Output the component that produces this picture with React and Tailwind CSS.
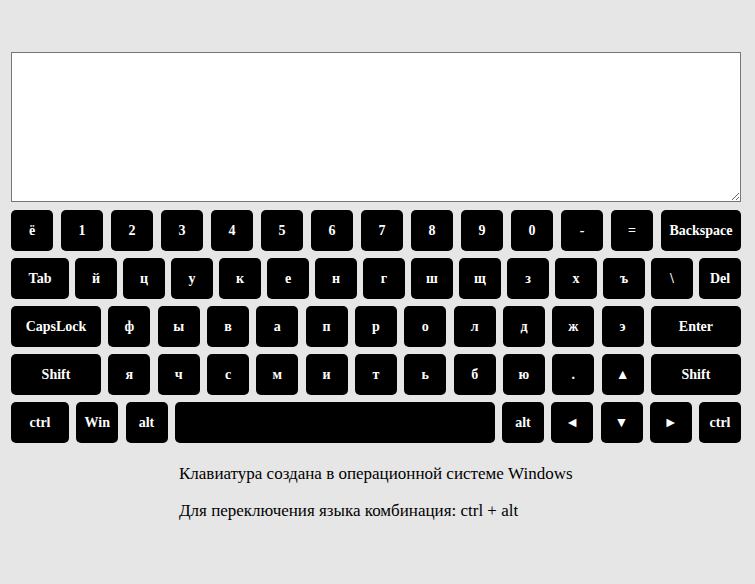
import React from 'react';

// key rows: [label, width]
const rows = [
  [['ё', 42], ['1', 42], ['2', 42], ['3', 42], ['4', 42], ['5', 42], ['6', 42], ['7', 42], ['8', 42], ['9', 42], ['0', 42], ['-', 42], ['=', 42], ['Backspace', 80]],
  [['Tab', 58], ['й', 42], ['ц', 42], ['у', 42], ['к', 42], ['е', 42], ['н', 42], ['г', 42], ['ш', 42], ['щ', 42], ['з', 42], ['х', 42], ['ъ', 42], ['\\', 42], ['Del', 42]],
  [['CapsLock', 90], ['ф', 42], ['ы', 42], ['в', 42], ['а', 42], ['п', 42], ['р', 42], ['о', 42], ['л', 42], ['д', 42], ['ж', 42], ['э', 42], ['Enter', 90]],
  [['Shift', 90], ['я', 42], ['ч', 42], ['с', 42], ['м', 42], ['и', 42], ['т', 42], ['ь', 42], ['б', 42], ['ю', 42], ['.', 42], ['▲', 42], ['Shift', 90]],
  [['ctrl', 58], ['Win', 42], ['alt', 42], ['', 320], ['alt', 42], ['◄', 42], ['▼', 42], ['►', 42], ['ctrl', 42]],
];

const Key = ({ label, width }) => (
  <div
    className="h-[41px] shrink-0 flex items-center justify-center rounded-[5px] bg-black text-white text-[14px] font-bold select-none"
    style={{ width }}
  >
    {label}
  </div>
);

export default function App() {
  return (
    <div className="min-h-[584px] bg-[#e6e6e6] font-[family-name:Liberation_Serif,serif] text-black">
      <div className="pt-[52px] pl-[11px] w-[741px]">
        <textarea className="block w-[730px] h-[150px] border border-[#767676] bg-white resize-y" />

        {/* KEYBOARD */}
        <div className="mt-[8px] flex flex-col gap-[7px]">
          {rows.map((row, i) => (
            <div key={i} className="flex justify-between w-[730px]">
              {row.map(([label, w], j) => (
                <Key key={j} label={label} width={w} />
              ))}
            </div>
          ))}
        </div>

        <div className="pl-[168px] pt-[20px] text-[17px] leading-[21px]">
          <p>Клавиатура создана в операционной системе Windows</p>
          <p className="mt-[16px]">Для переключения языка комбинация: ctrl + alt</p>
        </div>
      </div>
    </div>
  );
}
